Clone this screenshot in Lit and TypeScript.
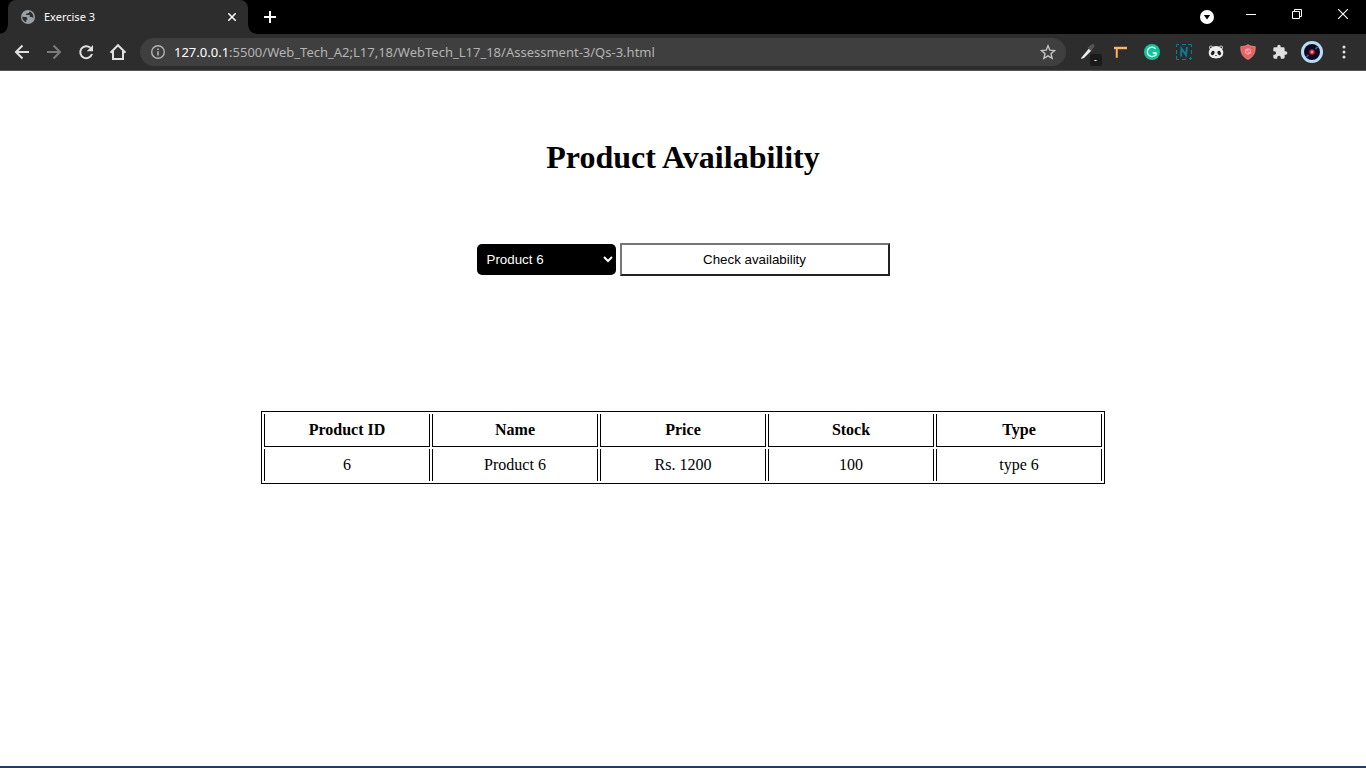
import { LitElement, html, css } from "lit";
import { customElement, state } from "lit/decorators.js";

interface Product {
  id: number;
  name: string;
  price: string;
  stock: number;
  type: string;
}

const PRODUCTS: Product[] = [1, 2, 3, 4, 5, 6].map((id) => ({
  id,
  name: `Product ${id}`,
  price: `Rs. ${id * 200}`,
  stock: 100,
  type: `type ${id}`,
}));

@customElement("browser-bar")
class BrowserBar extends LitElement {
  static styles = css`
    :host {
      display: block;
      font-family: "Noto Sans", "Open Sans", sans-serif;
      color: #fff;
    }
    button {
      display: flex;
      align-items: center;
      justify-content: center;
      padding: 0;
      border: 0;
      background: none;
      color: inherit;
      font: inherit;
    }
    svg {
      display: block;
      flex: none;
    }
    .strip {
      display: flex;
      height: 34px;
      padding-left: 8px;
      background: #000;
    }
    .tab {
      position: relative;
      display: flex;
      align-items: center;
      box-sizing: border-box;
      width: 240px;
      padding: 0 8px 0 12px;
      gap: 8px;
      border-radius: 8px 8px 0 0;
      background: #2d2d2d;
      font-size: 11px;
      line-height: 16px;
    }
    .tab::before,
    .tab::after {
      content: "";
      position: absolute;
      bottom: 0;
      width: 8px;
      height: 8px;
    }
    .tab::before {
      right: 100%;
      background: radial-gradient(circle at 0 0, #000 7px, #2d2d2d 8px);
    }
    .tab::after {
      left: 100%;
      background: radial-gradient(circle at 100% 0, #000 7px, #2d2d2d 8px);
    }
    .title {
      flex: 1;
    }
    .close {
      width: 16px;
      height: 16px;
    }
    .new {
      width: 28px;
      margin-left: 8px;
    }
    .window {
      display: flex;
      margin-left: auto;
    }
    .window button {
      width: 46px;
      height: 28px;
    }
    .window .search {
      width: 42px;
      height: 34px;
    }
    .toolbar {
      display: flex;
      align-items: center;
      gap: 6px;
      height: 36px;
      padding: 0 6px;
      background: #2d2d2d;
      border-bottom: 1px solid #565656;
    }
    .group {
      display: flex;
      color: #e0e0e0;
    }
    .group button {
      width: 32px;
      height: 32px;
    }
    .group .dim {
      color: #7b7b7b;
    }
    .address {
      display: flex;
      flex: 1;
      align-items: center;
      box-sizing: border-box;
      height: 28px;
      padding: 0 10px;
      gap: 8px;
      border-radius: 14px;
      background: #3f3f3f;
      color: #b4b4b4;
      font-size: 13px;
      line-height: 20px;
    }
    .url {
      flex: 1;
      white-space: nowrap;
      color: #b4b4b4;
      text-decoration: none;
    }
    .host {
      color: #fff;
    }
  `;

  render() {
    return html`
      <div class="strip">
        <div class="tab">
          <svg width="16" height="16" viewBox="0 0 16 16">
            <circle cx="8" cy="8" r="7" fill="#9aa0a6" />
            <path d="M2.200 7.800 5.700 8c1 .1 1.700.8 1.700 1.700v.7H6.300v2.900C4 12.800 2.200 10.600 2.200 7.800ZM9.500 2.600C9.300 3.900 8.600 4.500 7.500 4.500H6.200V6h3.600v2h1.500c1 0 1.700.6 1.900 1.400.8-2.800-.8-5.900-3.700-6.800Z" fill="#2d2d2d" />
          </svg>
          <span class="title">Exercise 3</span>
          <button class="close" aria-label="Close tab">
            <svg width="8" height="8" viewBox="0 0 8 8" stroke="#fff" stroke-width="1.500"><path d="m0 0 8 8M8 0 0 8" /></svg>
          </button>
        </div>
        <button class="new" aria-label="New tab">
          <svg width="12" height="12" viewBox="0 0 12 12" stroke="#fff" stroke-width="2"><path d="M6 0v12M0 6h12" /></svg>
        </button>
        <div class="window">
          <button class="search" aria-label="Search tabs">
            <svg width="14" height="14" viewBox="0 0 14 14"><circle cx="7" cy="7" r="7" fill="#fff" /><path d="M3.800 5h6.400L7 9.600Z" fill="#000" /></svg>
          </button>
          <button aria-label="Minimise">
            <svg width="10" height="10" viewBox="0 0 10 10"><path d="M0 5h10v1H0z" fill="#fff" /></svg>
          </button>
          <button aria-label="Restore">
            <svg width="10" height="10" viewBox="0 0 10 10" fill="none" stroke="#fff"><path d="M.5 2.500h7v7h-7zM2.500 2.500v-2h7v7h-2" /></svg>
          </button>
          <button aria-label="Close">
            <svg width="10" height="10" viewBox="0 0 10 10" stroke="#fff" stroke-width="1.100"><path d="m0 0 10 10M10 0 0 10" /></svg>
          </button>
        </div>
      </div>
      <div class="toolbar">
        <div class="group">
          <button aria-label="Back">
            <svg width="16" height="16" viewBox="0 0 16 16" fill="none" stroke="currentColor" stroke-width="2"><path d="M15 8H2.500M8.500 1.500 2 8l6.500 6.500" /></svg>
          </button>
          <button class="dim" aria-label="Forward">
            <svg width="16" height="16" viewBox="0 0 16 16" fill="none" stroke="currentColor" stroke-width="2"><path d="M1 8h12.500M7.500 1.500 14 8l-6.500 6.500" /></svg>
          </button>
          <button aria-label="Reload">
            <svg width="16" height="16" viewBox="0 0 16 16"><path d="M12.300 3.700A6 6 0 1 0 14 10" fill="none" stroke="currentColor" stroke-width="2" /><path d="M15 1v6.300H8.700Z" fill="currentColor" /></svg>
          </button>
          <button aria-label="Home">
            <svg width="18" height="18" viewBox="0 0 18 18" fill="none" stroke="currentColor" stroke-width="2"><path d="M1.500 9.700 9 2.200l7.500 7.500M4 8v8h10V8" /></svg>
          </button>
        </div>
        <div class="address">
          <svg width="16" height="16" viewBox="0 0 16 16"><circle cx="8" cy="8" r="6.300" fill="none" stroke="#b4b4b4" stroke-width="1.400" /><path d="M7.200 4.500h1.600V6H7.200zM7.200 7.200h1.600v4.300H7.200z" fill="#b4b4b4" /></svg>
          <a class="url" href="#"><span class="host">127.0.0.1</span>:5500/Web_Tech_A2;L17,18/WebTech_L17_18/Assessment-3/Qs-3.html</a>
          <svg width="16" height="16" viewBox="0 0 16 16" fill="none" stroke="#c4c4c4" stroke-width="1.400"><path d="m8 1.800 1.800 4.400 4.700.4L11 9.700l1.100 4.600L8 11.800l-4.100 2.500L5 9.700 1.500 6.600l4.700-.4Z" /></svg>
        </div>
        <div class="group">
          <button aria-label="Colour picker">
            <svg width="30" height="28" viewBox="0 0 30 28">
              <path d="m8.500 19.500 7.500-9 2.500 2-7.500 7.500-3 1Z" fill="#eee" />
              <path d="m14.500 9.500 1.500-1 2.500-2c1.500-1.300 4 .5 2.700 2.500l-2 2.500-.7 2Z" fill="#555" />
              <rect x="17" y="16" width="12" height="12" rx="2" fill="#1a1a1a" />
              <path d="M21 22h1v1h-1z" fill="#f66" /><path d="M22 22h1v1h-1z" fill="#fff" /><path d="M23 22h1v1h-1z" fill="#4bf" />
            </svg>
          </button>
          <button aria-label="Page ruler">
            <svg width="16" height="16" viewBox="0 0 16 16"><path d="M2 2.500h13v3H6V14H3.500V5.500H2Z" fill="#a8642f" /><path d="M2 3h13v2H5.500v8.500H4V5H2Z" fill="#f5b476" /></svg>
          </button>
          <button aria-label="Writing assistant">
            <svg width="16" height="16" viewBox="0 0 16 16"><circle cx="8" cy="8" r="8" fill="#15c39a" /><path d="M11.700 4.900A4.700 4.700 0 1 0 12.500 9.200M12.700 9H8.700M11.800 9v3" fill="none" stroke="#e8fff8" stroke-width="1.300" /></svg>
          </button>
          <button aria-label="Notes">
            <svg width="18" height="18" viewBox="0 0 18 18" fill="none" stroke="#087f91"><path d="M1.500 4V1.500H4M7 1.500h4M13 1.500h3.500V4M1.500 7v4M16.500 7v4M1.500 13v3.500H4M7 16.500h4M14 15.500h3M15.500 14v3" /><path d="M6 13.500 6.500 5.500l4.500 6.500 1-8" stroke-width="2" stroke="#087b91" /></svg>
          </button>
          <button aria-label="Panda">
            <svg width="16" height="16" viewBox="0 0 16 16"><circle cx="3" cy="3.500" r="2" fill="#c8c8c8" /><circle cx="13" cy="3.500" r="2" fill="#c8c8c8" /><circle cx="3" cy="3.500" r="1" fill="#222" /><circle cx="13" cy="3.500" r="1" fill="#222" /><path d="M8 2c4 0 7.300 3 7.300 6.800 0 4-3.300 5.700-7.300 5.700S.7 12.800.7 8.800C.7 5 4 2 8 2Z" fill="#eee" /><ellipse cx="4.800" cy="9" rx="1.700" ry="2.200" transform="rotate(30 4.800 9)" fill="#1b1b1b" /><ellipse cx="11.200" cy="9" rx="1.700" ry="2.200" transform="rotate(-30 11.200 9)" fill="#1b1b1b" /><path d="M7 11h2l-1 1.200Z" fill="#111" /></svg>
          </button>
          <button aria-label="Ad blocker">
            <svg width="16" height="16" viewBox="0 0 16 16"><path d="M8 .5c2 1.500 4.500 2 7.200 2C15.500 8.500 13.500 13 8 15.500 2.500 13 .5 8.500.8 2.500 3.500 2.500 6 2 8 .5Z" fill="#e96363" stroke="#ff9090" stroke-width=".7" /><circle cx="8" cy="7.500" r="2.600" fill="none" stroke="#fcd" stroke-width=".9" /><path d="m6.200 5.700 3.600 3.600" stroke="#fcd" stroke-width=".9" /></svg>
          </button>
          <button aria-label="Extensions">
            <svg width="16" height="16" viewBox="0 0 24 24" fill="#e0e0e0"><path d="M20.500 11H19V7a2 2 0 0 0-2-2h-4V3.500a2.500 2.500 0 0 0-5 0V5H4a2 2 0 0 0-2 2v3.800h1.500a2.700 2.700 0 0 1 0 5.400H2V20c0 1.100.9 2 2 2h3.800v-1.500a2.700 2.700 0 0 1 5.400 0V22H17a2 2 0 0 0 2-2v-4h1.500a2.500 2.500 0 0 0 0-5Z" /></svg>
          </button>
          <button aria-label="Profile">
            <svg width="22" height="22" viewBox="0 0 22 22"><circle cx="11" cy="11" r="11" fill="#b9dcfa" /><circle cx="11" cy="11" r="8" fill="#0d0b20" /><path d="m5.500 16 2-2M14.500 8l2-2" stroke="#5c6273" stroke-width="1.500" /><circle cx="11" cy="11" r="2.700" fill="#d71f5a" /><circle cx="11" cy="11" r="1.200" fill="#ffb35c" /></svg>
          </button>
          <button aria-label="Menu">
            <svg width="16" height="16" viewBox="0 0 16 16" fill="#e0e0e0"><circle cx="8" cy="3" r="1.500" /><circle cx="8" cy="8" r="1.500" /><circle cx="8" cy="13" r="1.500" /></svg>
          </button>
        </div>
      </div>
    `;
  }
}

@customElement("app-root")
class AppRoot extends LitElement {
  static styles = css`
    :host {
      display: flex;
      flex-direction: column;
      box-sizing: border-box;
      min-height: 100vh;
      border-bottom: 2px solid #233a61;
      background: #fff;
      color: #000;
      font-family: "Liberation Serif", "Times New Roman", serif;
    }
    main {
      display: flex;
      flex-direction: column;
      align-items: center;
      padding: 68px 8px 0;
    }
    h1 {
      margin: 0 0 68px;
      font-size: 32px;
      line-height: 36px;
    }
    .controls {
      display: flex;
      align-items: center;
      gap: 4px;
      margin-bottom: 135px;
    }
    .picker {
      width: 139px;
      height: 31px;
      padding: 0 6px;
      border: 0;
      border-radius: 5px;
      background: #000;
      color: #fff;
      font-family: "Liberation Sans", Arial, sans-serif;
    }
    .check {
      width: 270px;
      height: 33px;
      padding: 0;
      border: 2px solid;
      border-color: #767676 #212121 #212121 #767676;
      background: #fff;
      color: #000;
      font-family: "Liberation Sans", Arial, sans-serif;
    }
    table {
      width: 844px;
      max-width: 100%;
      table-layout: fixed;
      border: 1px solid #000;
      border-collapse: separate;
      border-spacing: 2px;
      font-size: 16px;
      line-height: 18px;
      text-align: center;
    }
    th,
    td {
      padding: 7px;
      border: solid #000;
      border-width: 0 1px;
    }
    th {
      border-bottom-width: 1px;
    }
  `;

  @state() private selected = 6;
  @state() private shown = 6;

  private pick(event: Event) {
    this.selected = Number((event.target as HTMLSelectElement).value);
  }

  private check() {
    this.shown = this.selected;
  }

  render() {
    const item = PRODUCTS.find((product) => product.id === this.shown)!;
    return html`
      <browser-bar></browser-bar>
      <main>
        <h1>Product Availability</h1>
        <div class="controls">
          <select class="picker" aria-label="Product" @change=${this.pick}>
            ${PRODUCTS.map(
              (product) => html`<option value=${product.id} ?selected=${product.id === this.selected}>${product.name}</option>`,
            )}
          </select>
          <button class="check" @click=${this.check}>Check availability</button>
        </div>
        <table>
          <thead>
            <tr><th>Product ID</th><th>Name</th><th>Price</th><th>Stock</th><th>Type</th></tr>
          </thead>
          <tbody>
            <tr><td>${item.id}</td><td>${item.name}</td><td>${item.price}</td><td>${item.stock}</td><td>${item.type}</td></tr>
          </tbody>
        </table>
      </main>
    `;
  }
}
